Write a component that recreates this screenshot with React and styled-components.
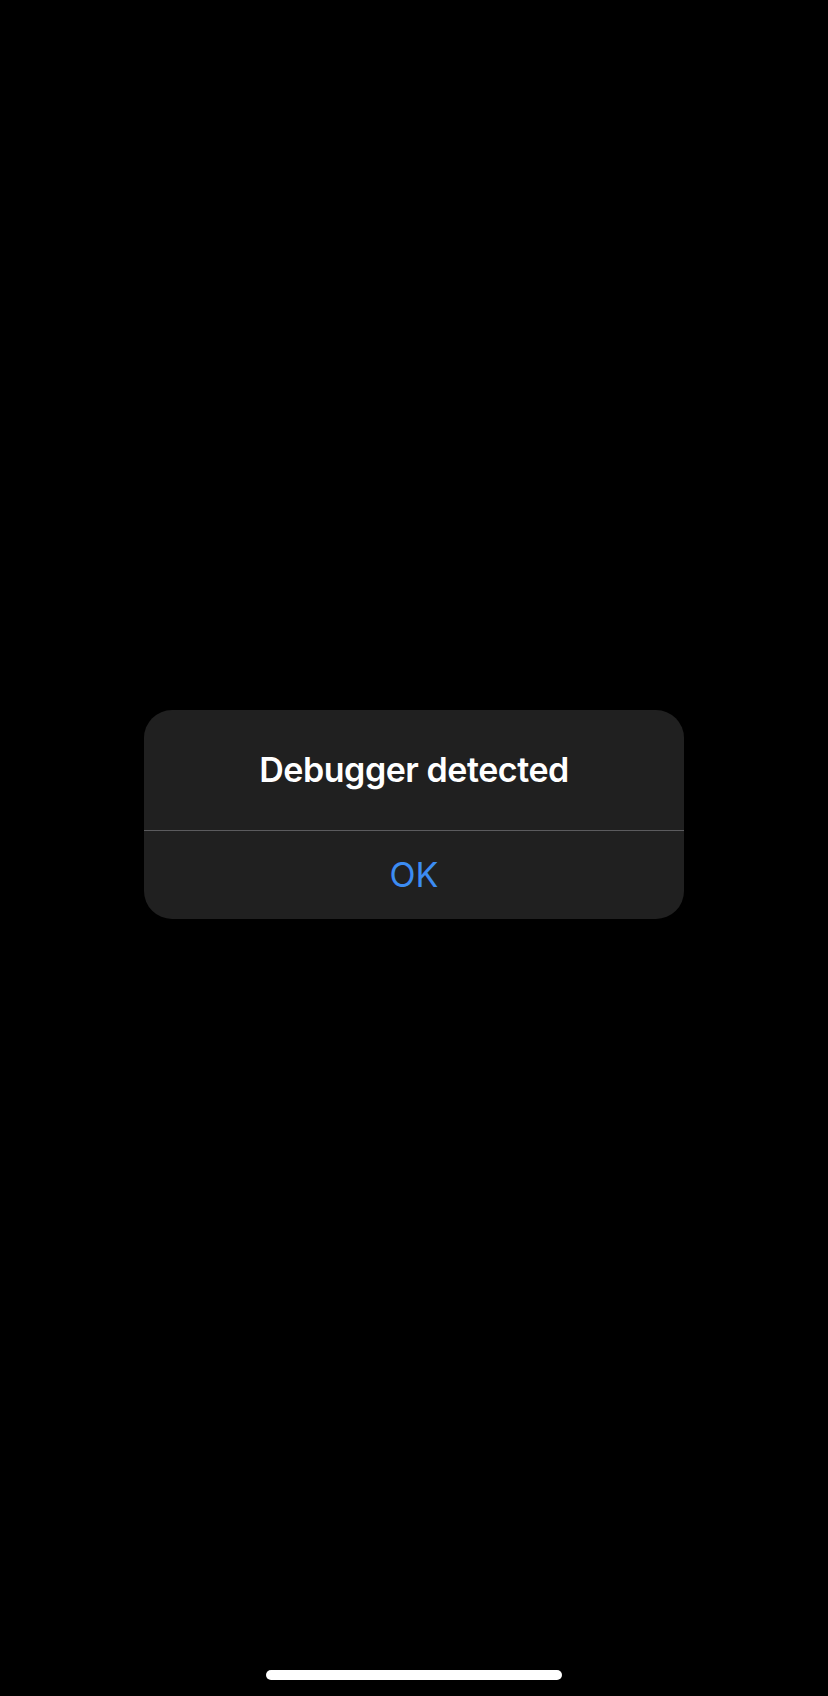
import React from "react";
import styled, { createGlobalStyle } from "styled-components";

const Global = createGlobalStyle`
  html, body { margin: 0; padding: 0; background: #000; }
  body { font-family: Inter, "Noto Sans", "Liberation Sans", sans-serif; }
  * { box-sizing: border-box; }
`;

const Screen = styled.div`
  width: 828px;
  height: 1696px;
  background: #000;
  display: flex;
  flex-direction: column;
  align-items: center;
`;

const Stage = styled.div`
  flex: 1;
  width: 100%;
  display: flex;
  flex-direction: column;
  align-items: center;
  padding-top: 710px;
`;

const Alert = styled.div`
  width: 540px;
  background: #202020;
  border-radius: 28px;
  overflow: hidden;
  display: flex;
  flex-direction: column;
`;

const Title = styled.div`
  height: 120px;
  display: flex;
  align-items: center;
  justify-content: center;
  padding-bottom: 2px;
  color: #fff;
  font-size: 34px;
  font-weight: 600;
  letter-spacing: -0.45px;
`;

const Divider = styled.div`
  height: 1px;
  background: #5b5b5e;
`;

const ActionButton = styled.button`
  height: 88px;
  border: 0;
  background: transparent;
  color: #3c8cf2;
  font-family: inherit;
  font-size: 34px;
  font-weight: 400;
  display: flex;
  align-items: center;
  justify-content: center;
  cursor: pointer;
  padding: 0 0 2px;
`;

const HomeBar = styled.div`
  width: 296px;
  height: 10px;
  border-radius: 5px;
  background: #fff;
  margin-bottom: 16px;
`;

export default function App() {
  return (
    <>
      <Global />
      <Screen>
        <Stage>
          <Alert role="alertdialog">
            <Title>Debugger detected</Title>
            <Divider />
            <ActionButton>OK</ActionButton>
          </Alert>
        </Stage>
        <HomeBar />
      </Screen>
    </>
  );
}
